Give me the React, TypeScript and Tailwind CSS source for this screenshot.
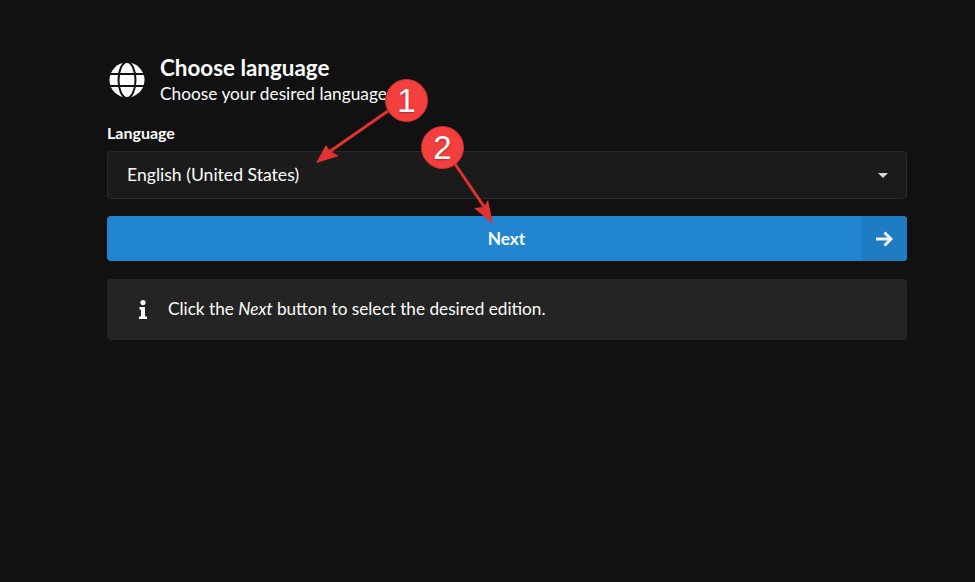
function GlobeIcon() {
  return (
    <svg width="36" height="36" viewBox="0 0 36 36" className="shrink-0">
      <circle cx="18" cy="18" r="17.5" fill="#fff" />
      <g stroke="#111" strokeWidth="2" fill="none">
        <path d="M1 12H35" />
        <path d="M1 24H35" />
        <ellipse cx="18" cy="18" rx="8.5" ry="18" />
      </g>
    </svg>
  );
}

function InfoGlyph() {
  return (
    <svg width="8" height="19" viewBox="0 0 8 19" fill="#fff" className="shrink-0">
      <circle cx="4" cy="2.6" r="2.6" />
      <path d="M0.5 7H6V16.5H8V19H0V16.5H2V9.5H0.5Z" />
    </svg>
  );
}

function Callout({ n, x, y }: { n: string; x: number; y: number }) {
  return (
    <div
      className="absolute w-[43px] h-[43px] rounded-full bg-[#f43f3f] border border-[#c93030] flex items-center justify-center text-white text-[33px] leading-none font-['Liberation_Sans',sans-serif] [text-shadow:0_1px_2px_rgba(0,0,0,0.3)]"
      style={{ left: x, top: y }}
    >
      {n}
    </div>
  );
}

function Arrows() {
  return (
    <svg width="975" height="582" className="absolute left-0 top-0 pointer-events-none">
      <path d="M388 111L329 152" stroke="#e03232" strokeWidth="3" />
      <path d="M316 163L326 145L330 151L339 156Z" fill="#e03232" />
      <path d="M455 164L485 208" stroke="#e03232" strokeWidth="3" />
      <path d="M493 224L474 208L484 207L488 200Z" fill="#e03232" />
    </svg>
  );
}

export default function App() {
  return (
    <div className="relative h-[582px] overflow-hidden bg-[#111111] text-white font-['Lato',sans-serif] pl-[107px] pr-[68px] pt-[55px]">
      <div className="flex items-center gap-[15px] pl-[2px]">
        <GlobeIcon />
        <div>
          <div className="mb-[2px] text-[22.4px] leading-[26px] font-bold">Choose language</div>
          <div className="text-[17.3px] leading-[22px]">Choose your desired language</div>
        </div>
      </div>

      <div className="mt-[19px] text-[16px] leading-[18px] font-bold">Language</div>
      <div className="mt-[9px] h-[48px] rounded-[4px] border border-[#2a2a2a] bg-[#1b1b1b] flex items-center justify-between pl-[19px] pr-[18px] text-[17.6px]">
        <span>English (United States)</span>
        <span className="w-0 h-0 border-x-[5px] border-x-transparent border-t-[5px] border-t-[#d8d8d8]" />
      </div>

      <div className="mt-[17px] h-[45px] rounded-[4px] bg-[#2185d0] flex overflow-hidden font-bold text-[17.3px]">
        <div className="flex-1 flex items-center justify-center pl-[44px]">Next</div>
        <div className="w-[45px] bg-[#1e7cc3] flex items-center justify-center pr-[2px]">
          <svg width="18" height="16" viewBox="0 0 18 16" fill="none" stroke="#eef6fc" strokeWidth="3">
            <path d="M1 8H15" />
            <path d="M9.5 1.5L16 8L9.5 14.5" />
          </svg>
        </div>
      </div>

      <div className="mt-[18px] h-[61px] rounded-[4px] bg-[#242424] flex items-center gap-[21px] pl-[32px] text-[17.2px]">
        <InfoGlyph />
        <span className="mb-[2px]">
          Click the <em>Next</em> button to select the desired edition.
        </span>
      </div>

      <Arrows />
      <Callout n="1" x={385} y={79} />
      <Callout n="2" x={421} y={126} />
    </div>
  );
}
